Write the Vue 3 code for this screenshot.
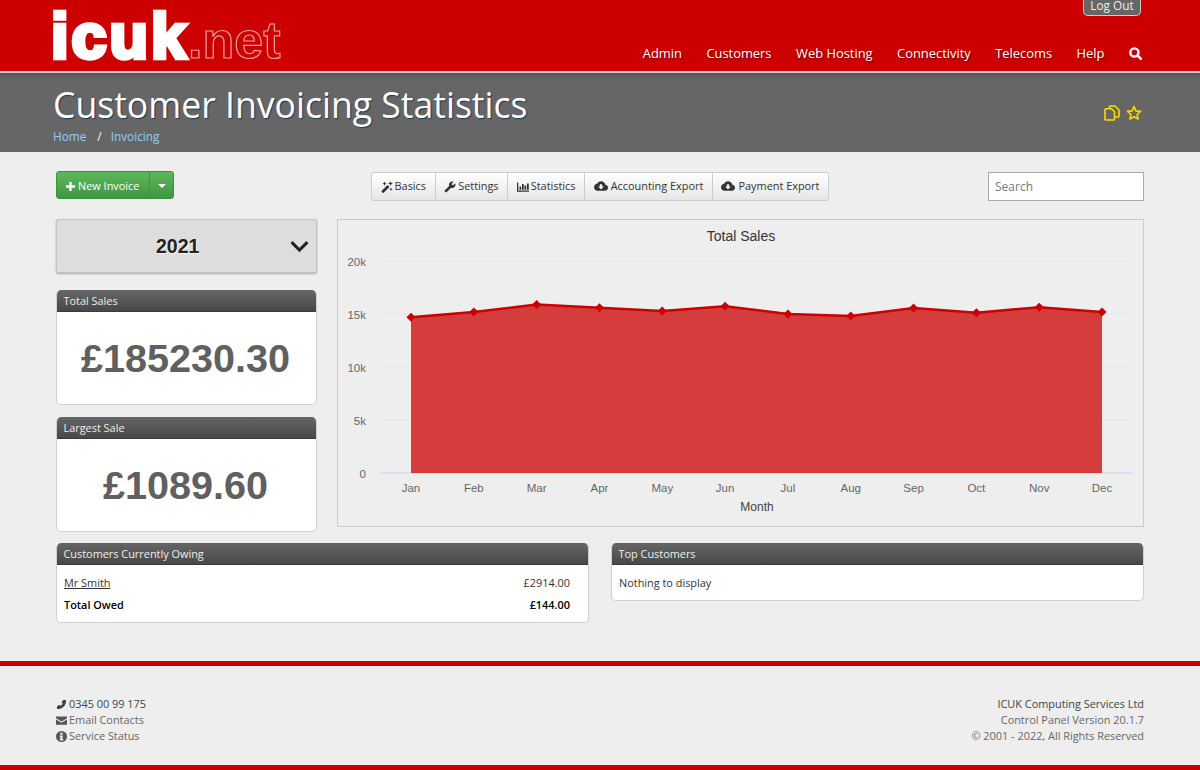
<script setup>
const nav = ['Admin', 'Customers', 'Web Hosting', 'Connectivity', 'Telecoms', 'Help']

const icons = {
  plus: 'M9.500 2h5v7.500H22v5h-7.500V22h-5v-7.500H2v-5h7.500z',
  wrench: 'M1.300 19l9.100-9.100c-.9-2.300-.4-5 1.500-6.900 2-2 5-2.400 7.400-1.300L15 6l3 3 4.400-4.300c1.200 2.400.7 5.400-1.300 7.400-1.900 1.900-4.600 2.400-6.900 1.500l-9.100 9.100c-.4.400-1 .4-1.400 0l-2.300-2.300c-.5-.4-.5-1.100-.1-1.400z',
  chart: 'M0 3h2.500v16H24v2.500H0zM5 11h3.500v6.500H5zM10 6h3.500v11.500H10zM15 9h3.500v8.500H15zM20 5h3.500v12.500H20z',
  cloud: 'M19.350 10.040C18.670 6.590 15.640 4 12 4 9.110 4 6.600 5.640 5.350 8.040 2.340 8.360 0 10.910 0 14c0 3.310 2.690 6 6 6h13c2.760 0 5-2.240 5-5 0-2.640-2.050-4.780-4.650-4.960zM17 13l-5 5-5-5h3V9h4v4h3z',
  phone: 'M22 16.500c0-.4-.2-.7-.6-.9l-3.900-2.700c-.5-.3-1-.2-1.400.2l-1.800 1.800c-2.200-1-3.900-2.700-4.900-4.900l1.900-1.900c.3-.4.400-.9.100-1.300L8.700 2.700c-.3-.4-.6-.6-1-.6H3.500C2.700 2.100 2 2.800 2 3.600 2 13.800 10.200 22 20.400 22c.8 0 1.600-.7 1.600-1.500z',
  mail: 'M0 3h24v4L12 14 0 7zM0 9.800l12 7 12-7V21H0z',
  info: 'M12 0a12 12 0 1 0 0 24 12 12 0 0 0 0-24zM9.500 4h5v4h-5zM8 10h6.500v8H16v2.500H8V18h1.500v-5.500H8z'
}

const tabs = [
  { label: 'Basics', icon: 'wand' },
  { label: 'Settings', icon: 'wrench' },
  { label: 'Statistics', icon: 'chart' },
  { label: 'Accounting Export', icon: 'cloud' },
  { label: 'Payment Export', icon: 'cloud' }
]

const panels = [
  { title: 'Total Sales', value: '£185230.30' },
  { title: 'Largest Sale', value: '£1089.60' }
]

// chart data, px are relative to the svg
const months = ['Jan', 'Feb', 'Mar', 'Apr', 'May', 'Jun', 'Jul', 'Aug', 'Sep', 'Oct', 'Nov', 'Dec']
const sales = [14700, 15180, 15900, 15600, 15280, 15740, 15000, 14820, 15560, 15120, 15640, 15200]
const ticks = [
  { label: '20k', v: 20000 },
  { label: '15k', v: 15000 },
  { label: '10k', v: 10000 },
  { label: '5k', v: 5000 },
  { label: '0', v: 0 }
]
const yOf = v => 253 - v * 0.0106
const xOf = i => 73 + i * 62.82
const line = sales.map((v, i) => `${xOf(i)},${yOf(v)}`).join(' ')
const area = `${xOf(0)},${yOf(0)} ${line} ${xOf(11)},${yOf(0)}`
const diamond = (v, i) => {
  const x = xOf(i)
  const y = yOf(v)
  return `${x - 4.5},${y} ${x},${y - 4.5} ${x + 4.5},${y} ${x},${y + 4.5}`
}
</script>

<template>
  <div class="page">
    <header class="top">
      <div class="logo"><span class="logo-a">icuk</span><span class="logo-b">.net</span></div>
      <div class="top-right">
        <a class="logout">Log Out</a>
        <nav class="nav">
          <a v-for="n in nav" :key="n">{{ n }}</a>
          <svg class="search-ico" viewBox="0 0 24 24"><circle cx="10" cy="10" r="7.500" fill="none" stroke="#fff" stroke-width="4.500" /><path d="M15.500 15.500l6.500 6.500" stroke="#fff" stroke-width="5" stroke-linecap="round" /></svg>
        </nav>
      </div>
    </header>

    <section class="band">
      <div>
        <h1>Customer Invoicing Statistics</h1>
        <div class="crumbs"><a>Home</a><span>/</span><a>Invoicing</a></div>
      </div>
      <div class="band-icons">
        <svg viewBox="0 0 16 16" class="y-ico">
          <path d="M5.500 3.500V1.800c0-.5.300-.8.800-.8h4.700l4 4v6.200c0 .5-.3.800-.8.800H10.500" fill="none" stroke="#ffd800" stroke-width="1.600" />
          <path d="M1.800 3.800h5.700l3 3v7.400c0 .5-.3.800-.8.800H1.800c-.5 0-.8-.3-.8-.8V4.600c0-.5.300-.8.800-.8z" fill="none" stroke="#ffd800" stroke-width="1.600" />
        </svg>
        <svg viewBox="0 0 24 24" class="y-ico"><path d="M12 2.500l2.900 6.300 6.900.8-5.100 4.700 1.400 6.800-6.100-3.400-6.100 3.400 1.400-6.800-5.100-4.700 6.900-.8z" fill="none" stroke="#ffd800" stroke-width="2.400" stroke-linejoin="round" /></svg>
      </div>
    </section>

    <main class="main">
      <div class="toolbar">
        <div class="new-btn">
          <span class="new-main"><svg viewBox="0 0 24 24" class="ico plus"><path :d="icons.plus" fill="#fff" /></svg>New Invoice</span>
          <span class="new-caret"><i></i></span>
        </div>
        <div class="tabs">
          <a v-for="t in tabs" :key="t.label" class="tab">
            <svg v-if="t.icon === 'wand'" viewBox="0 0 24 24" class="ico">
              <path d="M2.500 22.500L15 10" stroke="#333" stroke-width="5.500" />
              <path d="M7 1l1.300 3L11 5.200 8.300 6.500 7 9.500 5.700 6.500 3 5.200 5.700 4zM19 0l1.300 3.500L24 5l-3.700 1.500L19 10l-1.300-3.500L14 5l3.700-1.500zM20 13l1 2.500 2.500 1-2.500 1-1 2.500-1-2.500-2.500-1 2.500-1z" fill="#333" />
            </svg>
            <svg v-else viewBox="0 0 24 24" class="ico" :class="{ wide: t.icon === 'cloud' }"><path :d="icons[t.icon]" fill="#333" fill-rule="evenodd" /></svg>{{ t.label }}
          </a>
        </div>
        <input class="search" placeholder="Search" />
      </div>

      <div class="stats">
        <div class="side">
          <div class="year">
            <span>2021</span>
            <svg viewBox="0 0 24 24" class="chev"><path d="M2 6.500l10 10 10-10" fill="none" stroke="#222" stroke-width="3.800" /></svg>
          </div>
          <div v-for="p in panels" :key="p.title" class="panel stat">
            <div class="panel-head">{{ p.title }}</div>
            <div class="stat-val">{{ p.value }}</div>
          </div>
        </div>

        <div class="chart">
          <svg width="805" height="306" viewBox="0 0 805 306">
            <text x="403" y="21" text-anchor="middle" class="c-title">Total Sales</text>
            <g v-for="t in ticks" :key="t.label">
              <path :d="`M42 ${yOf(t.v)}H795`" :stroke="t.v === 0 ? '#ccd6eb' : '#e6e6e6'" />
              <text x="28" :y="yOf(t.v) + 5" text-anchor="end" class="c-label">{{ t.label }}</text>
            </g>
            <polygon :points="area" fill="#cc0000" fill-opacity="0.75" />
            <polyline :points="line" fill="none" stroke="#cc0000" stroke-width="2.500" />
            <polygon v-for="(v, i) in sales" :key="i" :points="diamond(v, i)" fill="#cc0000" />
            <text v-for="(m, i) in months" :key="m" :x="xOf(i)" y="272" text-anchor="middle" class="c-label">{{ m }}</text>
            <text x="419" y="291" text-anchor="middle" class="c-axis">Month</text>
          </svg>
        </div>
      </div>

      <div class="bottom">
        <div class="panel">
          <div class="panel-head">Customers Currently Owing</div>
          <div class="rows">
            <div class="row"><a class="cust">Mr Smith</a><span>£2914.00</span></div>
            <div class="row total"><span>Total Owed</span><span>£144.00</span></div>
          </div>
        </div>
        <div class="panel">
          <div class="panel-head">Top Customers</div>
          <div class="rows"><div class="row">Nothing to display</div></div>
        </div>
      </div>
    </main>

    <footer class="foot">
      <div class="foot-in">
        <div>
          <div class="strong"><svg viewBox="0 0 24 24" class="ico"><path :d="icons.phone" transform="matrix(-1 0 0 1 24 0)" fill="#444" /></svg>0345 00 99 175</div>
          <div><svg viewBox="0 0 24 24" class="ico"><path :d="icons.mail" fill="#555" /></svg>Email Contacts</div>
          <div><svg viewBox="0 0 24 24" class="ico"><path :d="icons.info" fill="#555" fill-rule="evenodd" /></svg>Service Status</div>
        </div>
        <div class="foot-r">
          <div class="strong">ICUK Computing Services Ltd</div>
          <div>Control Panel Version 20.1.7</div>
          <div>© 2001 - 2022, All Rights Reserved</div>
        </div>
      </div>
    </footer>
  </div>
</template>

<style scoped>
.page {
  width: 1200px;
  height: 770px;
  overflow: hidden;
  background: #eeeeee;
  font-family: "Open Sans", "Liberation Sans", sans-serif;
  font-size: 10.9px;
  color: #333;
  display: flex;
  flex-direction: column;
}

.top {
  height: 73px;
  box-sizing: border-box;
  background: #cc0000;
  border-bottom: 2px solid #ccc;
  padding: 0 58px 0 51px;
  display: flex;
  justify-content: space-between;
  flex: none;
}

.logo {
  display: flex;
  align-items: baseline;
  height: 71px;
  line-height: 73px;
  font-family: "Liberation Sans", sans-serif;
  font-weight: bold;
}

.logo-a {
  font-size: 63px;
  letter-spacing: 3px;
  color: #fff;
  -webkit-text-stroke: 4.500px #fff;
}

.logo-b {
  font-size: 52px;
  margin-left: -1px;
  color: transparent;
  -webkit-text-stroke: 1.200px rgba(255, 255, 255, 0.6);
}

.top-right {
  display: flex;
  flex-direction: column;
  align-items: flex-end;
}

.logout {
  width: 58px;
  height: 16px;
  line-height: 11px;
  font-size: 11.800px;
  text-align: center;
  box-sizing: border-box;
  margin-right: 1px;
  background: #666;
  color: #eee;
  border: 1px solid #ccc;
  border-top: none;
  border-radius: 0 0 5px 5px;
}

.nav {
  display: flex;
  align-items: center;
  gap: 24.500px;
  margin-top: 26px;
  font-size: 12.900px;
  line-height: 22px;
  color: #fff;
  text-shadow: 1px 1px 2px rgba(0, 0, 0, 0.5);
}

.search-ico {
  width: 13px;
  height: 13px;
}

.band {
  height: 79px;
  background: linear-gradient(#555, #666 6px);
  padding: 0 58px 0 53px;
  display: flex;
  justify-content: space-between;
  flex: none;
}

h1 {
  margin: 9px 0 0;
  font-size: 35.600px;
  font-weight: 400;
  line-height: 44px;
  color: #fff;
  text-shadow: 1px 1px 1px #1d3a52;
}

.crumbs {
  display: flex;
  gap: 11px;
  margin-top: 1px;
  font-size: 11.800px;
  line-height: 18px;
  color: #fff;
}

.crumbs span {
  margin-right: -2px;
}

.crumbs a {
  color: #8ed0f5;
}

.band-icons {
  display: flex;
  gap: 6px;
  margin-top: 32px;
}

.y-ico {
  width: 16px;
  height: 16px;
}

.main {
  flex: 1;
  padding: 19px 56px 0;
}

.toolbar {
  display: grid;
  grid-template-columns: 1fr auto 1fr;
  align-items: start;
  height: 48px;
}

.ico {
  width: 12px;
  height: 12px;
  margin-right: 2px;
  vertical-align: -2.500px;
}

.ico.wide {
  width: 14px;
  height: 14px;
  margin-right: 3px;
  vertical-align: -3px;
}

.foot .ico {
  width: 11px;
  height: 11px;
  margin-right: 2px;
  vertical-align: -1.500px;
}

.plus {
  width: 11px;
  height: 11px;
  margin-right: 2px;
  vertical-align: -1.500px;
}

.new-btn {
  display: flex;
  width: 118px;
  height: 28px;
  color: #fff;
  background: linear-gradient(#5cb85c, #419641);
  border: 1px solid #3e8f3e;
  border-radius: 3px;
  box-sizing: border-box;
}

.new-main {
  width: 93px;
  padding-left: 8px;
  box-sizing: border-box;
  line-height: 27px;
  white-space: nowrap;
  border-right: 1px solid #3e8f3e;
}

.new-caret {
  flex: 1;
  display: flex;
  align-items: center;
  justify-content: center;
}

.new-caret i {
  border: 4px solid transparent;
  border-top-color: #fff;
  border-bottom: none;
  margin-top: 2px;
}

.tabs {
  display: flex;
  height: 27px;
  margin-top: 1px;
  border: 1px solid #ccc;
  border-radius: 3px;
  background: linear-gradient(#fff, #e6e6e6);
}

.tab {
  padding: 0 8.600px;
  line-height: 25px;
  white-space: nowrap;
  border-left: 1px solid #ccc;
}

.tab:first-child {
  border-left: none;
}

.search {
  justify-self: end;
  width: 156px;
  height: 29px;
  margin-top: 1px;
  box-sizing: border-box;
  padding: 0 6px;
  border: 1px solid #aaa;
  background: #fff;
  font: 12px "Open Sans", sans-serif;
  outline: none;
}

.search::placeholder {
  color: #777;
}

.stats {
  display: flex;
  justify-content: space-between;
}

.side {
  width: 261px;
}

.year {
  height: 54px;
  box-sizing: border-box;
  background: #ddd;
  border: 1px solid #c4c4c4;
  border-radius: 2px;
  box-shadow: 0 1px 2px rgba(0, 0, 0, 0.3);
  display: flex;
  align-items: center;
  padding: 0 7px 0 99px;
  justify-content: space-between;
  font: bold 19.500px "Liberation Sans", sans-serif;
  color: #222;
  text-shadow: 1px 1px 0 rgba(255, 255, 255, 0.8);
}

.chev {
  width: 19px;
  height: 19px;
}

.panel {
  background: #fff;
  border: 1px solid #d0d0d0;
  border-top: none;
  border-radius: 5px;
  box-sizing: border-box;
  overflow: hidden;
}

.stat {
  height: 115px;
  margin-top: 17px;
}

.stat + .stat {
  margin-top: 12px;
}

.panel-head {
  height: 22px;
  line-height: 22px;
  color: #eee;
  background: linear-gradient(#666, #484848);
  border-bottom: 1px solid #3a3a3a;
  box-sizing: border-box;
  margin: 0 -1px;
  padding-left: 7.500px;
}

.stat-val {
  text-align: center;
  font: bold 39.600px/92px "Liberation Sans", sans-serif;
  color: #606060;
  padding-right: 2px;
}

.chart {
  width: 807px;
  height: 308px;
  box-sizing: border-box;
  border: 1px solid #ccc;
}

.chart svg {
  display: block;
}

.c-title {
  font: 14px "Liberation Sans", sans-serif;
  fill: #333;
}

.c-label {
  font: 11.500px "Liberation Sans", sans-serif;
  fill: #666;
}

.c-axis {
  font: 12px "Liberation Sans", sans-serif;
  fill: #444;
}

.bottom {
  display: grid;
  grid-template-columns: 533px 533px;
  justify-content: space-between;
  align-items: start;
  margin-top: 11px;
}

.rows {
  padding: 7px 18px 6px 7px;
}

.row {
  display: flex;
  justify-content: space-between;
  line-height: 22px;
}

.cust {
  text-decoration: underline;
}

.total {
  font-weight: 600;
  color: #000;
}

.foot {
  flex: none;
  height: 109px;
  box-sizing: border-box;
  border-top: 5px solid #cc0000;
  border-bottom: 5px solid #cc0000;
  padding: 30px 56px 0;
  color: #666;
  line-height: 16px;
}

.foot-in {
  display: flex;
  justify-content: space-between;
}

.foot-r {
  text-align: right;
}

.strong {
  color: #444;
}
</style>
